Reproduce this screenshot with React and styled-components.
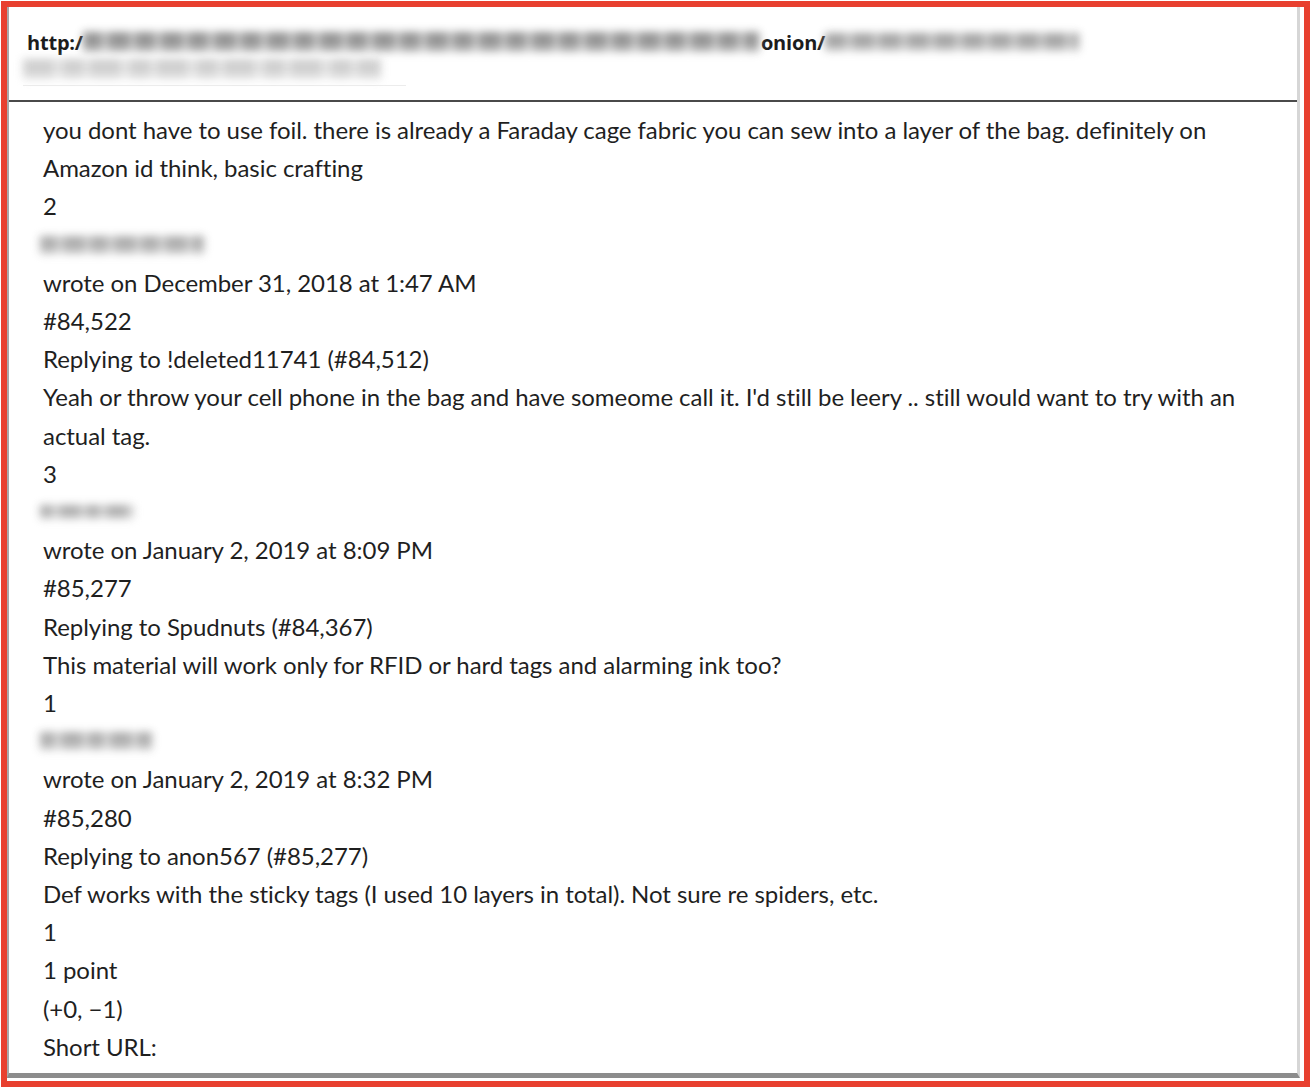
import React from "react";
import styled, { createGlobalStyle } from "styled-components";

const Global = createGlobalStyle`
  html, body { margin: 0; padding: 0; background: #ffffff; }
  body { font-family: Lato, "Open Sans", sans-serif; }
`;

const Frame = styled.div`
  box-sizing: border-box;
  width: 1309px;
  height: 1086px;
  margin: 1px 0 0 1px;
  border: 6px solid #e8402f;
  padding: 0 4px 3px 0;
  display: flex;
`;

const Window = styled.div`
  flex: 1;
  display: flex;
  flex-direction: column;
  border-left: 2px solid #a8a8a8;
  border-right: 3px solid #d6d6d6;
  border-bottom: 5px solid #8c8c8c;
  background: #fff;
  overflow: hidden;
`;

const Header = styled.div`
  height: 95px;
  box-sizing: border-box;
  padding: 22px 0 0 18px;
  border-bottom: 2px solid #4a4a4a;
  display: flex;
  flex-direction: column;
  gap: 4px;
`;

const UrlRow = styled.div`
  display: flex;
  align-items: center;
  height: 26px;
  font-family: "Open Sans", Lato, sans-serif;
  font-weight: 700;
  font-size: 20px;
  color: #1c1c1c;
  letter-spacing: -0.2px;
`;

const Redacted = styled.span`
  display: inline-block;
  width: ${(p) => p.$w}px;
  height: ${(p) => p.$h || 18}px;
  margin-left: ${(p) => p.$ml || 0}px;
  background:
    linear-gradient(180deg, rgba(255,255,255,0) 50%, rgba(255,255,255,0.4) 100%),
    repeating-linear-gradient(
      90deg,
      ${(p) => p.$dark || "#9c9c9c"} 0 ${(p) => p.$a || 14}px,
      ${(p) => p.$light || "#c6c6c6"} ${(p) => p.$a || 14}px ${(p) => p.$b || 22}px,
      ${(p) => p.$dark || "#9c9c9c"} ${(p) => p.$b || 22}px ${(p) => (p.$b || 22) + 20}px,
      ${(p) => p.$light || "#c6c6c6"} ${(p) => (p.$b || 22) + 20}px ${(p) => (p.$b || 22) + 27}px
    );
  filter: blur(4px);
  opacity: ${(p) => p.$o || 0.95};
`;

const SubRow = styled.div`
  display: flex;
  flex-direction: column;
  gap: 6px;
  margin-left: -4px;
`;

const FaintLine = styled.div`
  width: 383px;
  height: 1px;
  background: #ececec;
`;

const Body = styled.div`
  padding: 9px 20px 0 34px;
  font-family: Lato, "Open Sans", sans-serif;
  font-size: 24px;
  line-height: 38.2px;
  color: #1f1f1f;
  letter-spacing: -0.05px;
`;

const Line = styled.div`
  white-space: nowrap;
`;

const UserLine = styled.div`
  height: 38.2px;
  display: flex;
  align-items: center;
  margin-left: -3px;
`;

const lines1 = [
  "you dont have to use foil. there is already a Faraday cage fabric you can sew into a layer of the bag. definitely on",
  "Amazon id think, basic crafting",
  "2",
];

export default function App() {
  return (
    <>
      <Global />
      <Frame>
        <Window>
          <Header>
            <UrlRow>
              http:/
              <Redacted $w={676} $h={20} $a={18} $b={26} $dark="#8e8e8e" $light="#bdbdbd" />
              <span style={{ marginLeft: 2 }}>onion/</span>
              <Redacted $w={254} $h={18} $a={20} $b={28} $dark="#a0a0a0" $light="#c4c4c4" />
            </UrlRow>
            <SubRow>
              <Redacted $w={358} $h={20} $dark="#cdcdcd" $light="#e2e2e2" $a={30} $b={40} />
              <FaintLine />
            </SubRow>
          </Header>
          <Body>
            {lines1.map((t) => (
              <Line key={t}>{t}</Line>
            ))}
            <UserLine>
              <Redacted $w={164} $h={18} $dark="#a9a9a9" $light="#cbcbcb" $a={16} $b={24} />
            </UserLine>
            <Line>wrote on December 31, 2018 at 1:47 AM</Line>
            <Line>#84,522</Line>
            <Line>Replying to !deleted11741 (#84,512)</Line>
            <Line>
              Yeah or throw your cell phone in the bag and have someome call it. I'd still be leery .. still would want to try with an
            </Line>
            <Line>actual tag.</Line>
            <Line>3</Line>
            <UserLine>
              <Redacted $w={94} $h={14} $dark="#a9a9a9" $light="#cfcfcf" $a={12} $b={20} />
            </UserLine>
            <Line>wrote on January 2, 2019 at 8:09 PM</Line>
            <Line>#85,277</Line>
            <Line>Replying to Spudnuts (#84,367)</Line>
            <Line>This material will work only for RFID or hard tags and alarming ink too?</Line>
            <Line>1</Line>
            <UserLine>
              <Redacted $w={112} $h={18} $dark="#a9a9a9" $light="#cfcfcf" $a={14} $b={22} />
            </UserLine>
            <Line>wrote on January 2, 2019 at 8:32 PM</Line>
            <Line>#85,280</Line>
            <Line>Replying to anon567 (#85,277)</Line>
            <Line>Def works with the sticky tags (I used 10 layers in total). Not sure re spiders, etc.</Line>
            <Line>1</Line>
            <Line>1 point</Line>
            <Line>(+0, −1)</Line>
            <Line>Short URL:</Line>
          </Body>
        </Window>
      </Frame>
    </>
  );
}
